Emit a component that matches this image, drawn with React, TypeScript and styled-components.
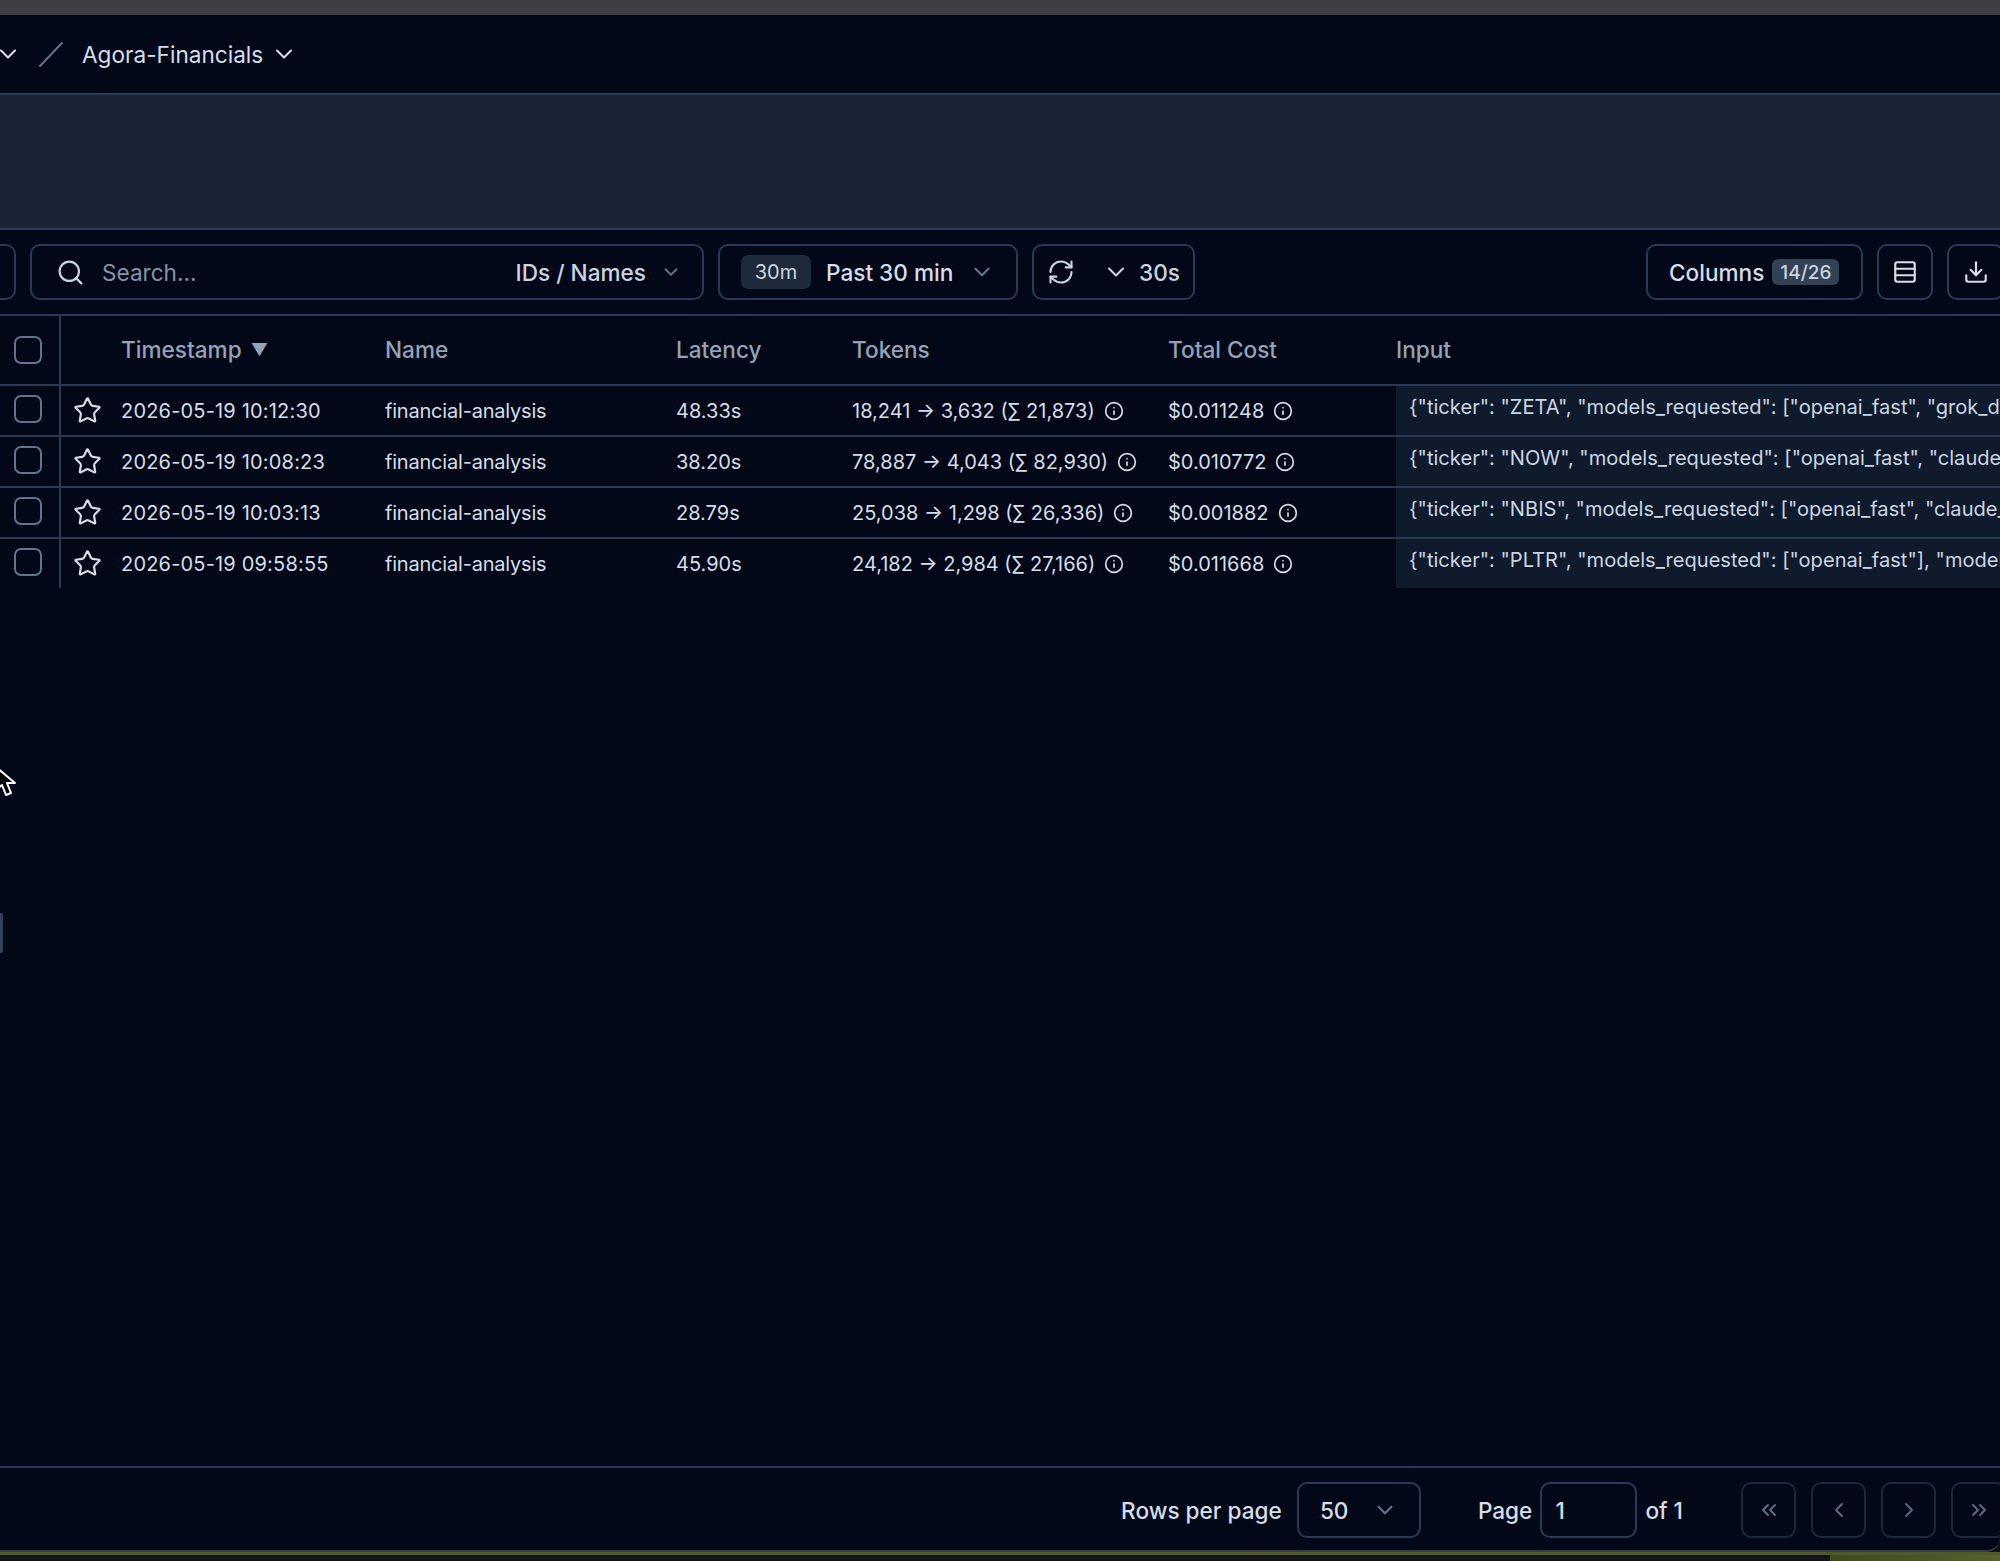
import React from 'react';
import styled, { createGlobalStyle } from 'styled-components';
import {
  ChevronDown,
  ChevronLeft,
  ChevronRight,
  ChevronsLeft,
  ChevronsRight,
  Download,
  Info,
  RefreshCw,
  Rows3,
  Search,
  Star,
} from 'lucide-react';

const line = '#2a3a55';
const gridColumns = '61px 60px 264px 291px 176px 316px 228px minmax(0, 1fr)';

const GlobalStyle = createGlobalStyle`
  html, body {
    margin: 0;
    padding: 0;
    height: 1561px;
    overflow: hidden;
    background: #121212;
    font-family: Inter, "Liberation Sans", sans-serif;
  }
  * { box-sizing: border-box; }
`;

const Page = styled.div`
  width: 2000px;
  height: 1561px;
  display: flex;
  flex-direction: column;
  overflow: hidden;
`;

const TitleBar = styled.div`
  height: 15px;
  flex-shrink: 0;
  background: #3e3e42;
`;

const AppWindow = styled.div`
  flex: 1;
  min-height: 0;
  display: flex;
  flex-direction: column;
  overflow: hidden;
  background: #020817;
  border-bottom: 2px solid #343a4b;
  border-bottom-right-radius: 14px;
`;

const Wallpaper = styled.div`
  height: 9px;
  flex-shrink: 0;
  display: flex;
  border-top: 3px solid #4f5a2a;
`;

const WallpaperDark = styled.div`
  width: 1830px;
  background: #141414;
`;

const WallpaperOlive = styled.div`
  flex: 1;
  background: linear-gradient(100deg, #3f4a1c, #56622a);
`;

const NavBar = styled.header`
  height: 80px;
  flex-shrink: 0;
  display: flex;
  align-items: center;
  border-bottom: 2px solid ${line};
  color: #d5deea;
  font-size: 22.6px;
`;

const ClippedChevron = styled(ChevronDown)`
  margin-left: -6px;
  flex-shrink: 0;
`;

const Crumb = styled.span`
  margin-right: 7px;
  white-space: nowrap;
`;

const SlashIcon = styled.svg`
  width: 26px;
  height: 26px;
  margin: 0 18px 0 16px;
`;

const Banner = styled.div`
  height: 135px;
  flex-shrink: 0;
  background: #1b2435;
  border-bottom: 2px solid ${line};
`;

const Toolbar = styled.div`
  height: 86px;
  flex-shrink: 0;
  display: flex;
  align-items: flex-start;
  padding-top: 14px;
  gap: 14px;
  border-bottom: 2px solid ${line};
  color: #d5deea;
  font-size: 22.6px;
`;

const Control = styled.div<{ $width: number }>`
  width: ${(p) => p.$width}px;
  height: 56px;
  flex-shrink: 0;
  display: flex;
  align-items: center;
  border: 2px solid ${line};
  border-radius: 10px;
  white-space: nowrap;
`;

const ClippedControl = styled(Control)`
  border-left: 0;
  border-top-left-radius: 0;
  border-bottom-left-radius: 0;
`;

const SearchControl = styled(Control)`
  padding: 0 20px 0 24px;
  color: #cbd5e1;
  font-weight: 500;
`;

const Placeholder = styled.span`
  flex: 1;
  margin-left: 17px;
  color: #8794a8;
  font-weight: 400;
`;

const SearchChevron = styled(ChevronDown)`
  color: #64748b;
  margin-left: 14px;
`;

const TimeControl = styled(Control)`
  padding: 0 21px 0 21px;
  font-weight: 500;
`;

const TimeBadge = styled.span`
  width: 70px;
  height: 34px;
  display: flex;
  align-items: center;
  justify-content: center;
  margin-right: 15px;
  border-radius: 7px;
  background: #1e293b;
  color: #cbd5e1;
  font-size: 20px;
  font-weight: 400;
`;

const TimeLabel = styled.span`
  flex: 1;
  color: #d5deea;
`;

const RefreshControl = styled(Control)`
  padding: 0 13px 0 13px;
  color: #cbd5e1;
  font-weight: 500;
`;

const RefreshChevron = styled(ChevronDown)`
  margin-left: 27px;
  margin-right: 9px;
`;

const ToolbarRight = styled.div`
  display: flex;
  gap: 14px;
  margin-left: auto;
  margin-right: -4px;
`;

const ColumnsControl = styled(Control)`
  padding-left: 21px;
  font-weight: 500;
  color: #d5deea;
`;

const ColumnsBadge = styled.span`
  width: 67px;
  height: 26px;
  display: flex;
  align-items: center;
  justify-content: center;
  margin-left: 8px;
  border-radius: 6px;
  background: #334155;
  color: #cbd5e1;
  font-size: 19px;
`;

const IconControl = styled(Control)`
  justify-content: center;
  color: #d5deea;
`;

const TableArea = styled.section`
  flex: 1;
  min-height: 0;
  position: relative;
`;

const Row = styled.div<{ $height: number; $lined: boolean }>`
  display: grid;
  grid-template-columns: ${gridColumns};
  height: ${(p) => p.$height}px;
  border-bottom: ${(p) => (p.$lined ? `2px solid ${line}` : 'none')};
`;

const CheckCell = styled.div<{ $top: number }>`
  padding: ${(p) => p.$top}px 0 0 14px;
  border-right: 2px solid ${line};
`;

const CheckBox = styled.span`
  display: block;
  width: 28px;
  height: 28px;
  border: 2px solid #64748b;
  border-radius: 7px;
`;

const StarCell = styled.div`
  display: flex;
  align-items: center;
  padding-left: 12px;
  color: #d5deea;
`;

const HeaderCell = styled.div`
  display: flex;
  align-items: center;
  padding-bottom: 1px;
  color: #94a3b8;
  font-size: 22.6px;
  font-weight: 500;
  white-space: nowrap;
`;

const SortMark = styled.span`
  margin-left: 9px;
  font-size: 17px;
`;

const DataCell = styled.div`
  display: flex;
  align-items: center;
  gap: 9px;
  color: #d5deea;
  font-size: 20px;
  white-space: nowrap;
`;

const TimeCell = styled(DataCell)`
  letter-spacing: 0.18px;
`;

const NameCell = styled(DataCell)`
  letter-spacing: -0.2px;
`;

const InputCell = styled.div`
  padding: 8px 0 0 13px;
  overflow: hidden;
  background: #0f1a2c;
  color: #cbd5e1;
  font-size: 20.1px;
  line-height: 26px;
  white-space: nowrap;
`;

const Pointer = styled.svg`
  position: absolute;
  left: -6px;
  top: 449px;
  width: 22px;
  height: 33px;
`;

const ResizeHandle = styled.div`
  position: absolute;
  left: 0;
  top: 597px;
  width: 3px;
  height: 40px;
  background: #334155;
  border-radius: 0 2px 2px 0;
`;

const Footer = styled.footer`
  height: 84px;
  flex-shrink: 0;
  display: flex;
  justify-content: flex-end;
  align-items: center;
  padding-top: 2px;
  margin-right: -6px;
  border-top: 2px solid ${line};
  color: #d5deea;
  font-size: 22.6px;
  font-weight: 500;
`;

const SelectBox = styled(Control)`
  margin: 0 57px 0 15px;
  padding: 0 21px 0 21px;
  justify-content: space-between;
  color: #d5deea;
`;

const PageInput = styled(Control)`
  margin: 0 8px;
  padding-left: 13px;
`;

const PagerGroup = styled.div`
  display: flex;
  gap: 15px;
  margin-left: 58px;
`;

const PagerButton = styled.div`
  width: 55px;
  height: 56px;
  display: flex;
  align-items: center;
  justify-content: center;
  border: 2px solid #1d2739;
  border-radius: 10px;
  color: #5d6b80;
`;

const GrayChevron = styled(ChevronDown)`
  color: #64748b;
`;

const traces = [
  {
    time: '2026-05-19 10:12:30',
    latency: '48.33s',
    tokens: '18,241 → 3,632 (∑ 21,873)',
    cost: '$0.011248',
    input: '{"ticker": "ZETA", "models_requested": ["openai_fast", "grok_deep", "claude_fast"]}',
  },
  {
    time: '2026-05-19 10:08:23',
    latency: '38.20s',
    tokens: '78,887 → 4,043 (∑ 82,930)',
    cost: '$0.010772',
    input: '{"ticker": "NOW", "models_requested": ["openai_fast", "claude_fast", "grok_deep"]}',
  },
  {
    time: '2026-05-19 10:03:13',
    latency: '28.79s',
    tokens: '25,038 → 1,298 (∑ 26,336)',
    cost: '$0.001882',
    input: '{"ticker": "NBIS", "models_requested": ["openai_fast", "claude_fast", "grok_deep"]}',
  },
  {
    time: '2026-05-19 09:58:55',
    latency: '45.90s',
    tokens: '24,182 → 2,984 (∑ 27,166)',
    cost: '$0.011668',
    input: '{"ticker": "PLTR", "models_requested": ["openai_fast"], "models_used": ["openai_fast"]}',
  },
];

const App = () => {
  return (
    <Page>
      <GlobalStyle />
      <TitleBar />
      <AppWindow>
        <NavBar>
          <ClippedChevron size={28} strokeWidth={1.8} />
          <SlashIcon viewBox="0 0 26 26">
            <path d="M2 25 L24 2" stroke="#64748b" strokeWidth="2" strokeLinecap="round" fill="none" />
          </SlashIcon>
          <Crumb>Agora-Financials</Crumb>
          <ChevronDown size={28} strokeWidth={1.8} />
        </NavBar>
        <Banner />
        <Toolbar>
          <ClippedControl $width={16} />
          <SearchControl $width={674}>
            <Search size={29} color="#cbd5e1" strokeWidth={1.8} />
            <Placeholder>Search...</Placeholder>
            <span>IDs / Names</span>
            <SearchChevron size={22} />
          </SearchControl>
          <TimeControl $width={300}>
            <TimeBadge>30m</TimeBadge>
            <TimeLabel>Past 30 min</TimeLabel>
            <GrayChevron size={26} />
          </TimeControl>
          <RefreshControl $width={163}>
            <RefreshCw size={28} strokeWidth={1.8} />
            <RefreshChevron size={28} strokeWidth={1.8} />
            <span>30s</span>
          </RefreshControl>
          <ToolbarRight>
            <ColumnsControl $width={217}>
              Columns
              <ColumnsBadge>14/26</ColumnsBadge>
            </ColumnsControl>
            <IconControl $width={56}>
              <Rows3 size={26} />
            </IconControl>
            <IconControl $width={57}>
              <Download size={26} />
            </IconControl>
          </ToolbarRight>
        </Toolbar>
        <TableArea>
          <Row $height={70} $lined>
            <CheckCell $top={20}>
              <CheckBox />
            </CheckCell>
            <div />
            <HeaderCell>
              Timestamp<SortMark>▼</SortMark>
            </HeaderCell>
            <HeaderCell>Name</HeaderCell>
            <HeaderCell>Latency</HeaderCell>
            <HeaderCell>Tokens</HeaderCell>
            <HeaderCell>Total Cost</HeaderCell>
            <HeaderCell>Input</HeaderCell>
          </Row>
          {traces.map((trace, index) => {
            const lined = index < traces.length - 1;
            return (
              <Row key={trace.time} $height={lined ? 51 : 49} $lined={lined}>
                <CheckCell $top={9}>
                  <CheckBox />
                </CheckCell>
                <StarCell>
                  <Star size={29} strokeWidth={1.8} />
                </StarCell>
                <TimeCell>{trace.time}</TimeCell>
                <NameCell>financial-analysis</NameCell>
                <DataCell>{trace.latency}</DataCell>
                <DataCell>
                  {trace.tokens}
                  <Info size={20} />
                </DataCell>
                <DataCell>
                  {trace.cost}
                  <Info size={20} />
                </DataCell>
                <InputCell>{trace.input}</InputCell>
              </Row>
            );
          })}
          <Pointer viewBox="0 0 22 33">
            <path
              d="M2 2 L2 25 L8 20 L12 30 L17 28 L13 18 L21 18 Z"
              fill="#000"
              stroke="#fff"
              strokeWidth="2"
              strokeLinejoin="round"
            />
          </Pointer>
          <ResizeHandle />
        </TableArea>
        <Footer>
          <span>Rows per page</span>
          <SelectBox $width={124}>
            50
            <GrayChevron size={26} />
          </SelectBox>
          <span>Page</span>
          <PageInput $width={97}>1</PageInput>
          <span>of 1</span>
          <PagerGroup>
            <PagerButton>
              <ChevronsLeft size={24} />
            </PagerButton>
            <PagerButton>
              <ChevronLeft size={24} />
            </PagerButton>
            <PagerButton>
              <ChevronRight size={24} />
            </PagerButton>
            <PagerButton>
              <ChevronsRight size={24} />
            </PagerButton>
          </PagerGroup>
        </Footer>
      </AppWindow>
      <Wallpaper>
        <WallpaperDark />
        <WallpaperOlive />
      </Wallpaper>
    </Page>
  );
};

export default App;
